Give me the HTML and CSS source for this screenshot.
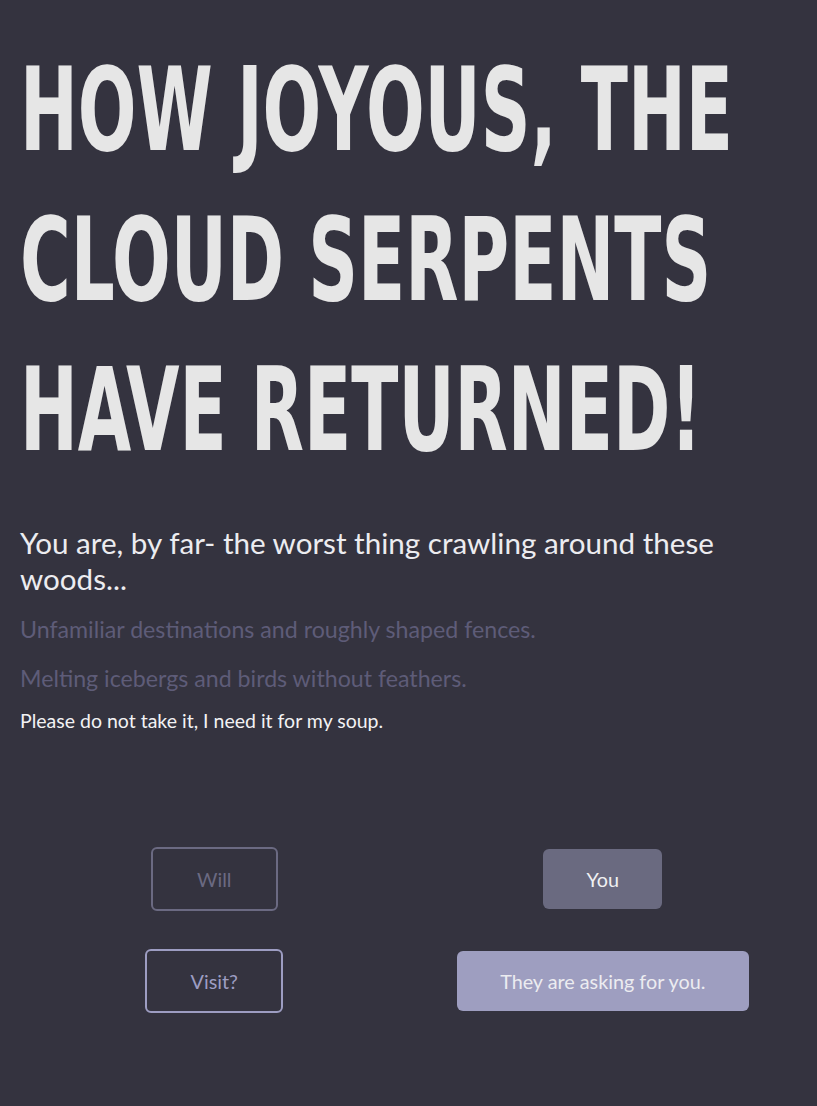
FILE: index.html
```html
<!DOCTYPE html>
<html lang="en">
<head>
<meta charset="utf-8">
<title>Cloud Serpents</title>
<link rel="stylesheet" href="styles.css">
</head>
<body>
<main class="page">
  <h1 class="headline">How joyous, the cloud serpents have returned!</h1>
  <h2 class="lead">You are, by far- the worst thing crawling around these woods...</h2>
  <p class="muted">Unfamiliar destinations and roughly shaped fences.</p>
  <p class="muted">Melting icebergs and birds without feathers.</p>
  <p class="note">Please do not take it, I need it for my soup.</p>
  <div class="actions">
    <div class="cell"><button class="btn btn-outline-dim">Will</button></div>
    <div class="cell"><button class="btn btn-fill-dim">You</button></div>
    <div class="cell"><button class="btn btn-outline">Visit?</button></div>
    <div class="cell"><button class="btn btn-fill">They are asking for you.</button></div>
  </div>
</main>
</body>
</html>
```
FILE: styles.css
```css
html, body {
  margin: 0;
  padding: 0;
  background: #34333f;
}
body {
  font-family: Lato, "Open Sans", sans-serif;
  color: #e6e6ea;
}
.page {
  padding: 0 20px 40px;
}
.headline {
  margin: 35px 0 0;
  width: 1120px;
  font-family: "DejaVu Sans Condensed", "Liberation Sans", sans-serif;
  font-weight: 700;
  font-size: 115px;
  line-height: 150px;
  text-transform: uppercase;
  color: #e6e6e6;
  transform: scaleX(0.668);
  transform-origin: left top;
}
.lead {
  margin: 40px 0 0;
  font-weight: 400;
  font-size: 29.6px;
  line-height: 36px;
  color: #ececf0;
}
.muted {
  margin: 18px 0 0;
  font-size: 23.2px;
  line-height: 28px;
  color: #5e5c78;
}
.muted + .muted {
  margin-top: 21px;
}
.note {
  margin: 17px 0 0;
  font-size: 19.5px;
  line-height: 23px;
  color: #f2f2f4;
}
.actions {
  margin-top: 115px;
  display: grid;
  grid-template-columns: 1fr 1fr;
  row-gap: 38px;
  align-items: center;
}
.cell {
  display: flex;
  justify-content: center;
}
.btn {
  font-family: Lato, sans-serif;
  font-size: 19.8px;
  line-height: 23px;
  padding: 18.5px 43.5px;
  border-radius: 6px;
  border: none;
  cursor: pointer;
}
.btn-outline-dim {
  background: transparent;
  border: 2px solid #6b6a82;
  color: #6b6a82;
  padding: 18.5px 44.5px;
}
.btn-fill-dim {
  background: #6a6a80;
  color: #f0f0f2;
}
.btn-outline {
  background: transparent;
  border: 2px solid #9d9dc2;
  color: #9d9dc2;
}
.btn-fill {
  background: #9e9ec0;
  color: #ececf0;
}
```
